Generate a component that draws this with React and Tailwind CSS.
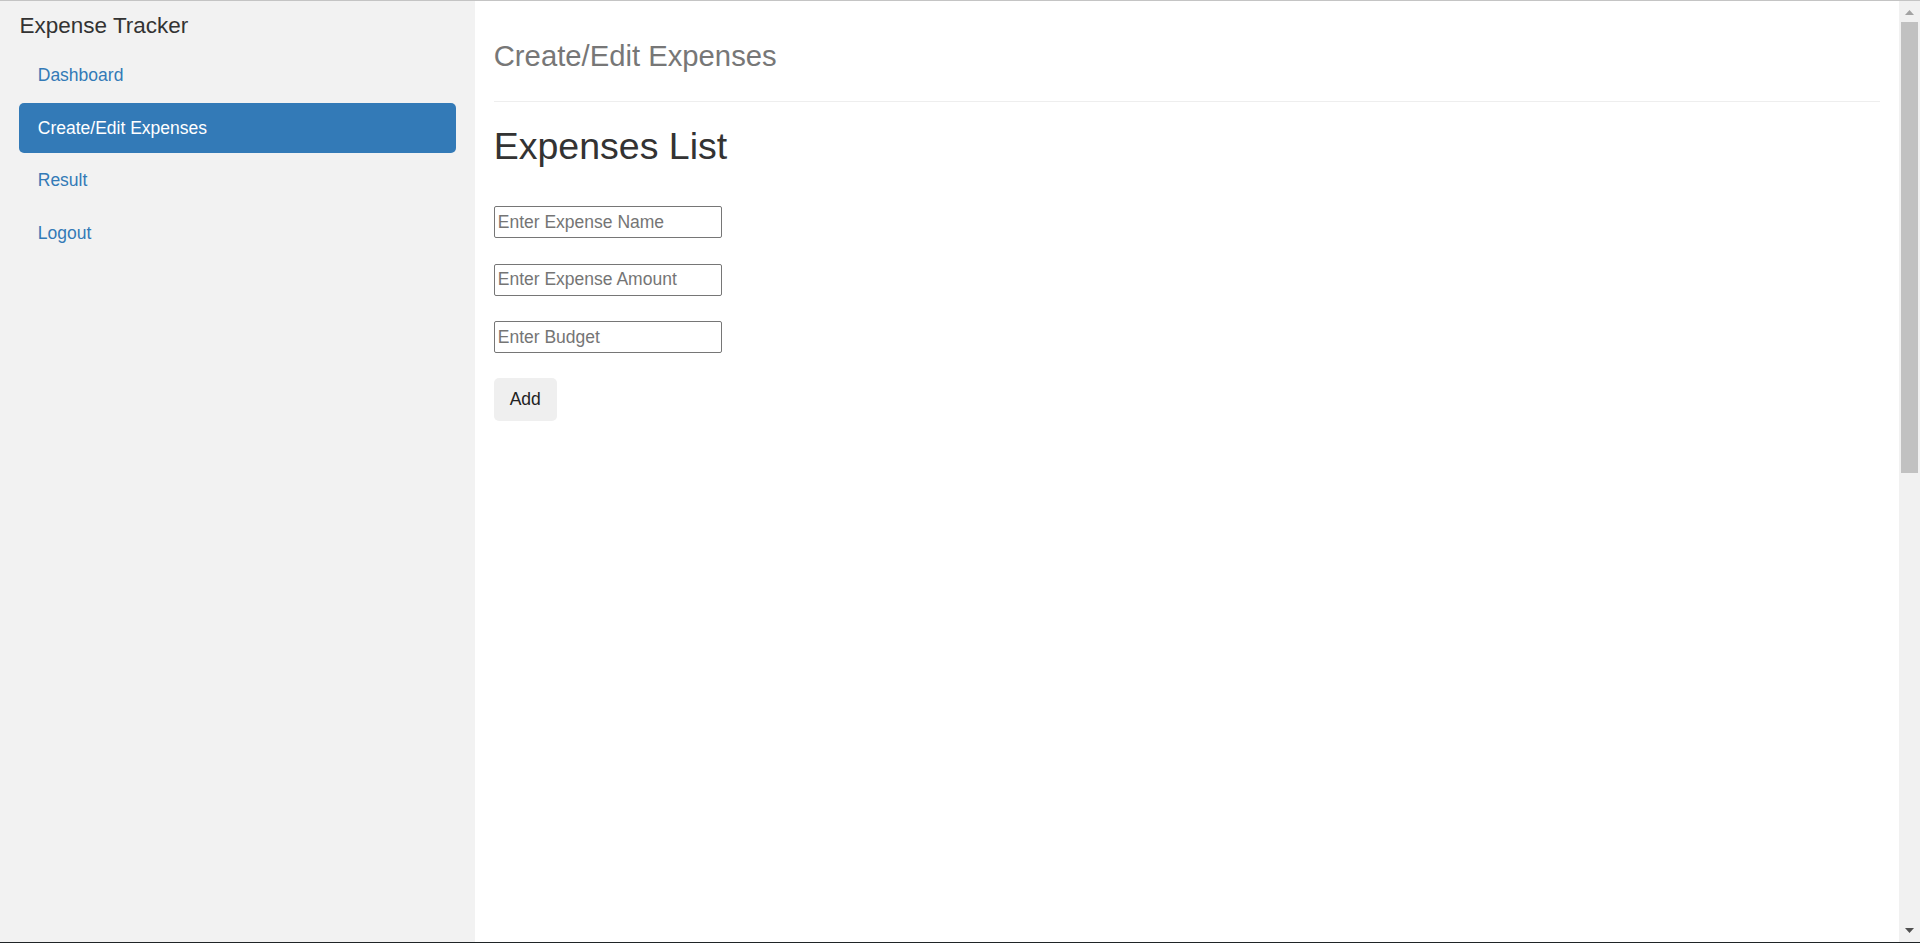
import { useState } from "react";

function NavItem({ label, active }) {
  return (
    <li className="mt-[2.5px] first:mt-0">
      <a
        href="#"
        className={
          "block rounded-[5px] px-[18.75px] py-[12.5px] text-[17.5px] leading-[25px] " +
          (active ? "bg-[#337ab7] text-white" : "text-[#337ab7]")
        }
      >
        {label}
      </a>
    </li>
  );
}

function Scrollbar() {
  return (
    <div className="w-[21px] bg-[#f1f1f1] flex flex-col">
      <div className="h-[21px] flex items-center justify-center pt-[1px]">
        <svg width="9" height="5" viewBox="0 0 9 5">
          <polygon points="0,5 9,5 4.5,0" fill="#a3a3a3" />
        </svg>
      </div>
      <div className="mx-[2px] h-[451px] bg-[#c1c1c1]" />
      <div className="flex-1" />
      <div className="h-[21px] flex items-center justify-center pb-[2px]">
        <svg width="9" height="5" viewBox="0 0 9 5">
          <polygon points="0,0 9,0 4.5,5" fill="#505050" />
        </svg>
      </div>
    </div>
  );
}

export default function App() {
  const [name, setName] = useState("");
  const [amount, setAmount] = useState("");
  const [budget, setBudget] = useState("");

  const inputCls =
    "block w-[228px] h-[32px] border border-[#767676] rounded-[2px] pl-[3px] text-[17.5px] text-[#333] placeholder:text-[#757575] bg-white outline-none";

  return (
    <div className="h-[943px] flex flex-col bg-white font-['Liberation_Sans',Arial,sans-serif] overflow-hidden">
      <div className="h-px bg-[#c4c4c4]" />
      <div className="flex flex-1 min-h-0">
        {/* sidebar */}
        <aside className="w-[475px] bg-[#f2f2f2]">
          <div className="pt-[9.5px] px-[19.5px] text-[22.5px] leading-[30px] text-[#333]">
            Expense Tracker
          </div>
          <ul className="mt-[10px] px-[19px]">
            <NavItem label="Dashboard" />
            <NavItem label="Create/Edit Expenses" active />
            <NavItem label="Result" />
            <NavItem label="Logout" />
          </ul>
        </aside>

        {/* main content */}
        <main className="flex-1 px-[18.75px]">
          <div className="mt-[39px] pb-[29px] border-b border-[#eeeeee]">
            <h1 className="text-[29.25px] leading-[32px] text-[#777]">Create/Edit Expenses</h1>
          </div>
          <h2 className="mt-[24px] text-[37.5px] leading-[41px] text-[#333]">Expenses List</h2>

          <div className="mt-[39px]">
            <input
              className={inputCls}
              placeholder="Enter Expense Name"
              value={name}
              onChange={(e) => setName(e.target.value)}
            />
            <input
              className={inputCls + " mt-[25.5px]"}
              placeholder="Enter Expense Amount"
              value={amount}
              onChange={(e) => setAmount(e.target.value)}
            />
            <input
              className={inputCls + " mt-[25.5px]"}
              placeholder="Enter Budget"
              value={budget}
              onChange={(e) => setBudget(e.target.value)}
            />
            <button className="mt-[25px] block w-[63px] h-[43px] rounded-[5px] bg-[#efefef] text-[17.5px] text-[#222]">
              Add
            </button>
          </div>
        </main>

        <Scrollbar />
      </div>
      <div className="h-px bg-[#1f2426]" />
    </div>
  );
}
